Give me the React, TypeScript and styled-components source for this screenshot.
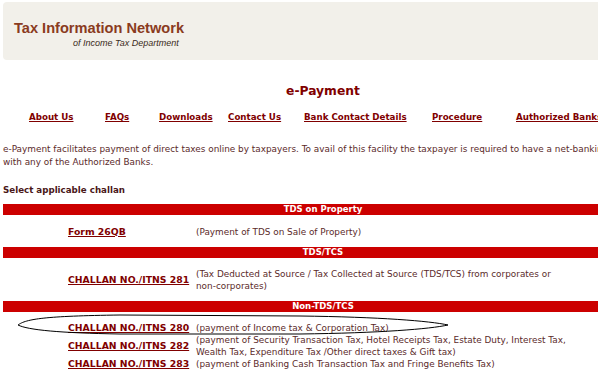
import styled, { createGlobalStyle } from 'styled-components'

const Global = createGlobalStyle`
  html, body {
    margin: 0;
    padding: 0;
    background: #fff;
    overflow: hidden;
  }
`

const Page = styled.div`
  position: relative;
  width: 640px;
  padding: 2px 0 0 3px;
  font-family: 'DejaVu Sans', Verdana, sans-serif;
  font-size: 8.9px;
  color: #5b2a2a;
`

const Header = styled.header`
  height: 58px;
  background: #f2f0ea;
  border-radius: 4px;
  padding: 18px 0 0 11px;
  box-sizing: border-box;

  h1 {
    margin: 0;
    font-family: 'Liberation Sans', Arial, sans-serif;
    font-size: 14.6px;
    font-weight: bold;
    color: #8a3b1e;
    line-height: 17px;
  }

  p {
    margin: 1px 0 0 59px;
    font-family: 'Liberation Sans', Arial, sans-serif;
    font-size: 9px;
    font-style: italic;
    color: #3a2a20;
    line-height: 10px;
  }
`

const Title = styled.h2`
  margin: 24px 0 0;
  text-align: center;
  font-size: 12.3px;
  font-weight: bold;
  color: #800000;
  line-height: 14px;
`

const Nav = styled.nav`
  display: flex;
  margin: 13px 0 0 26px;
  line-height: 12px;
`

const NavLink = styled.a<{ $w: number }>`
  width: ${p => p.$w}px;
  flex: none;
  font-size: 8.7px;
  font-weight: bold;
  color: #800000;
  text-decoration: underline;
  white-space: nowrap;
`

const Intro = styled.p`
  margin: 20px 0 0;
  line-height: 13px;
  white-space: nowrap;
`

const Select = styled.h3`
  margin: 15px 0 0;
  font-size: 8.7px;
  font-weight: bold;
  color: #4a1818;
  line-height: 12px;
`

const Bar = styled.div<{ $mt: number }>`
  margin-top: ${p => p.$mt}px;
  height: 11px;
  background: #cc0000;
  color: #fff;
  font-weight: bold;
  font-size: 8.5px;
  line-height: 11px;
  text-align: center;
`

const Row = styled.div<{ $h: number; $mt?: number }>`
  display: grid;
  grid-template-columns: 65px 128px 1fr;
  align-items: center;
  min-height: ${p => p.$h}px;
  margin-top: ${p => p.$mt ?? 0}px;
  line-height: 12px;
`

const ChallanLink = styled.a`
  grid-column: 2;
  font-size: 9.3px;
  font-weight: bold;
  color: #800000;
  text-decoration: underline;
  white-space: nowrap;
`

const Desc = styled.span`
  grid-column: 3;
  max-width: 380px;
`

const NoWrap = styled.span`
  white-space: nowrap;
`

const Oval = styled.svg`
  position: absolute;
  left: 0;
  top: 300px;
  pointer-events: none;
`

const links: [string, number][] = [
  ['About Us', 76],
  ['FAQs', 54],
  ['Downloads', 69],
  ['Contact Us', 76],
  ['Bank Contact Details', 128],
  ['Procedure', 84],
  ['Authorized Banks', 120],
]

export default function App() {
  return (
    <>
      <Global />
      <Page>
        <Header>
          <h1>Tax Information Network</h1>
          <p>of Income Tax Department</p>
        </Header>
        <Title>e-Payment</Title>
        <Nav>
          {links.map(([t, w]) => (
            <NavLink key={t} href="#" $w={w}>{t}</NavLink>
          ))}
        </Nav>
        <Intro>
          e-Payment facilitates payment of direct taxes online by taxpayers. To avail of this facility the taxpayer is required to have a net-banking account
          <br />
          with any of the Authorized Banks.
        </Intro>
        <Select>Select applicable challan</Select>

        <Bar $mt={8}>TDS on Property</Bar>
        <Row $h={31} $mt={1}>
          <ChallanLink href="#">Form 26QB</ChallanLink>
          <Desc>(Payment of TDS on Sale of Property)</Desc>
        </Row>
        <Bar $mt={0}>TDS/TCS</Bar>
        <Row $h={43}>
          <ChallanLink href="#">CHALLAN NO./ITNS 281</ChallanLink>
          <Desc>
            (Tax Deducted at Source / Tax Collected at Source (TDS/TCS) from corporates or <NoWrap>non-corporates)</NoWrap>
          </Desc>
        </Row>
        <Bar $mt={0}>Non-TDS/TCS</Bar>
        <Row $h={13} $mt={9}>
          <ChallanLink href="#">CHALLAN NO./ITNS 280</ChallanLink>
          <Desc>(payment of Income tax &amp; Corporation Tax)</Desc>
        </Row>
        <Row $h={24}>
          <ChallanLink href="#">CHALLAN NO./ITNS 282</ChallanLink>
          <Desc>(payment of Security Transaction Tax, Hotel Receipts Tax, Estate Duty, Interest Tax, Wealth Tax, Expenditure Tax /Other direct taxes &amp; Gift tax)</Desc>
        </Row>
        <Row $h={12}>
          <ChallanLink href="#">CHALLAN NO./ITNS 283</ChallanLink>
          <Desc>(payment of Banking Cash Transaction Tax and Fringe Benefits Tax)</Desc>
        </Row>

        <Oval width="460" height="40" viewBox="0 0 460 40">
          <path
            d="M 18 25 C 26 19, 45 16, 120 15 L 300 16 C 380 17, 430 21, 448 25 C 430 29, 380 33, 300 34 L 120 34 C 60 33, 28 30, 18 25 Z"
            fill="none"
            stroke="#000"
            strokeWidth="1"
          />
        </Oval>
      </Page>
    </>
  )
}
